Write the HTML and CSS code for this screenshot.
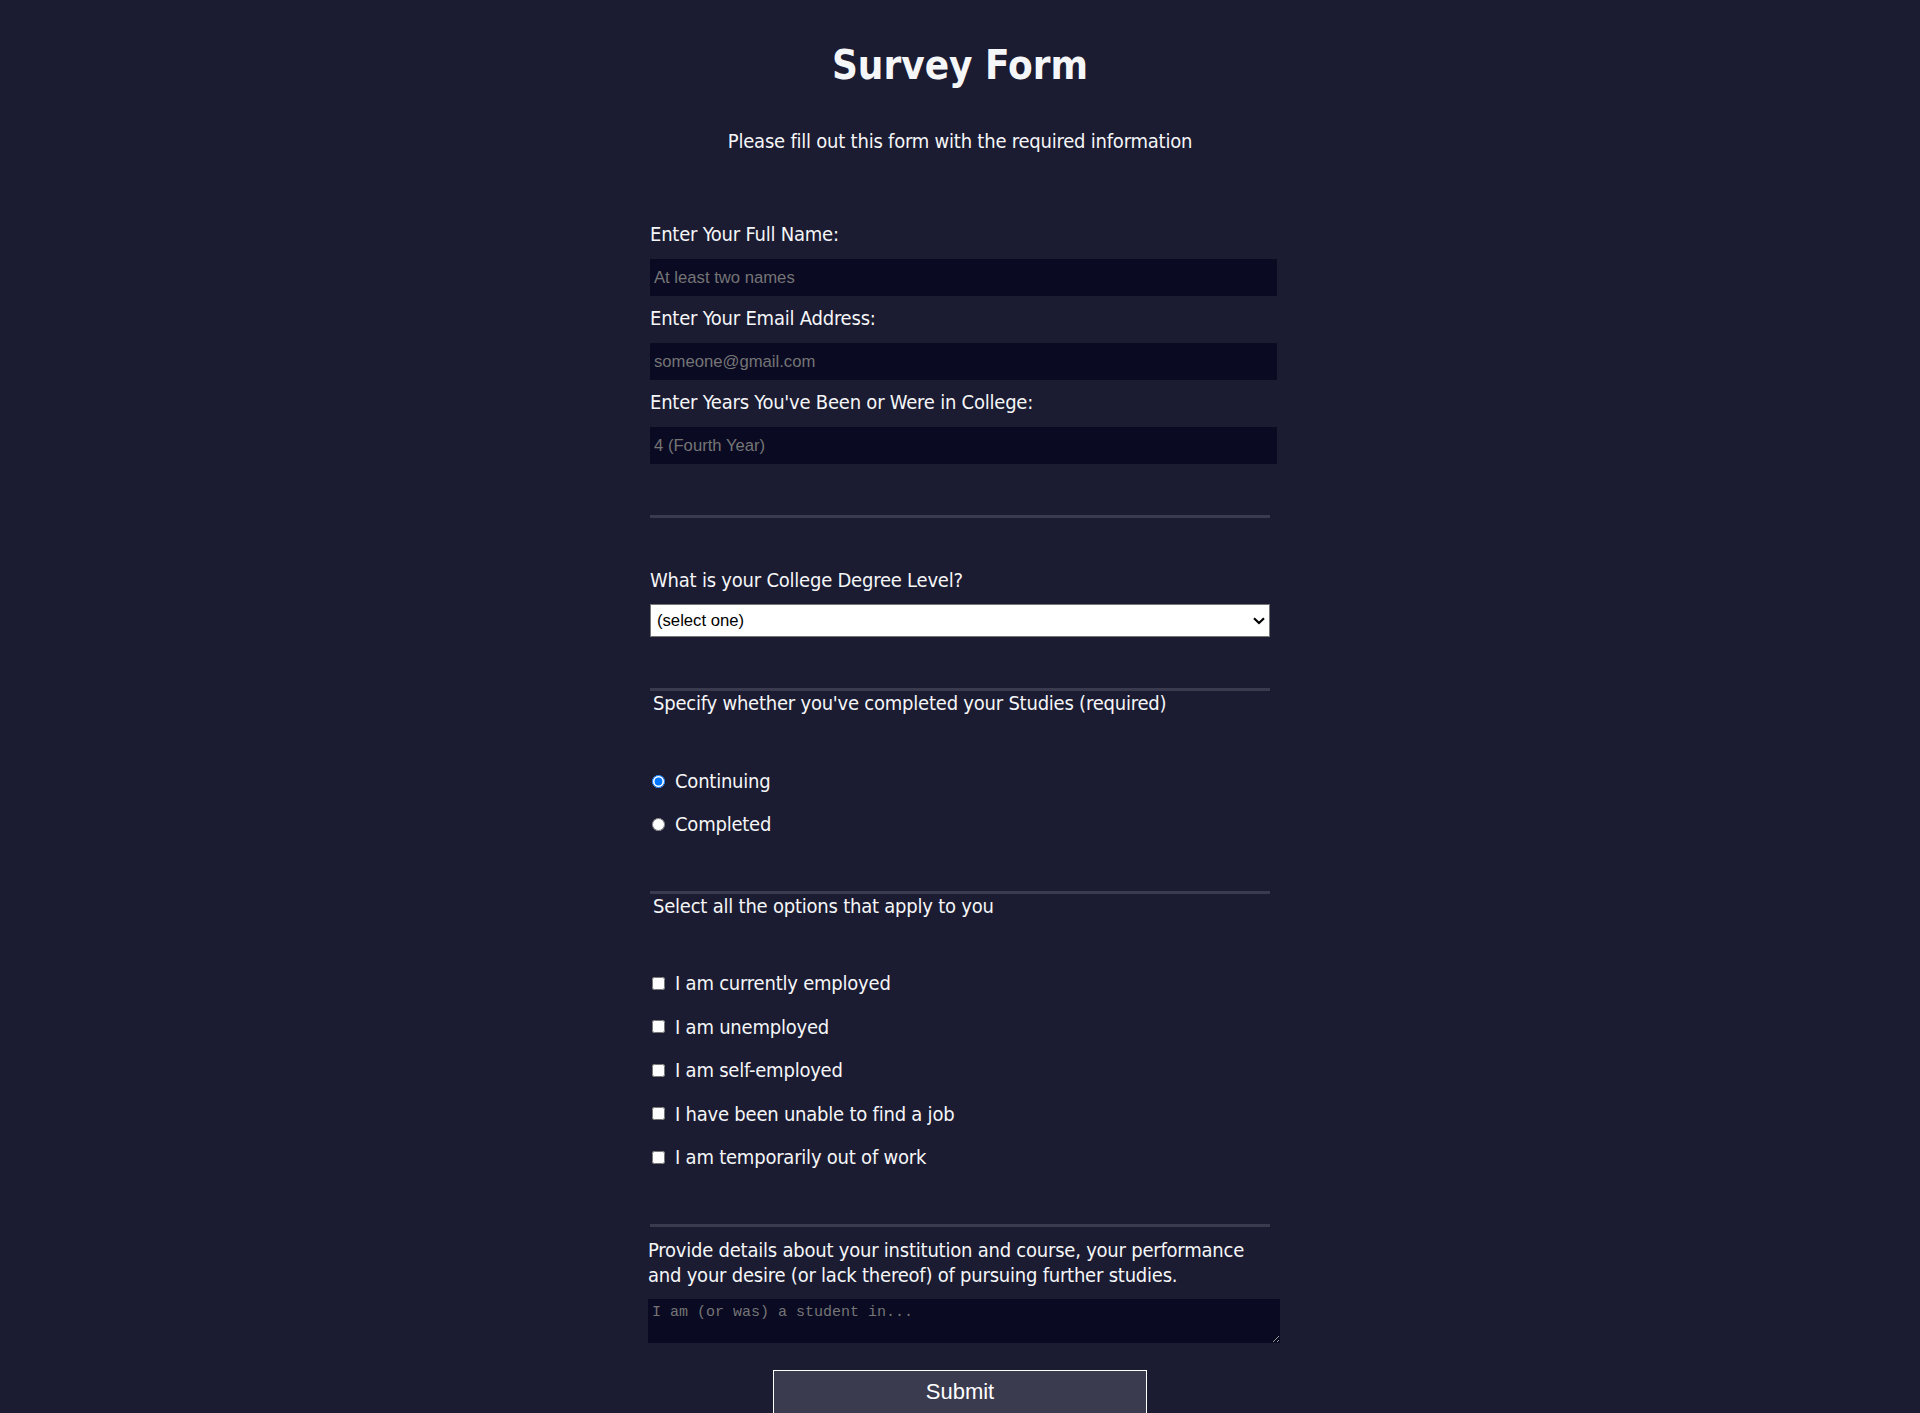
FILE: index.html
```html
<!DOCTYPE html>
<html lang="en">
<head>
<meta charset="utf-8">
<title>Survey Form</title>
<link rel="stylesheet" href="styles.css">
</head>
<body>
<header class="header">
  <h1 class="title" id="title">Survey Form</h1>
  <p class="description" id="description">Please fill out this form with the required information</p>
</header>
<form class="survey" id="survey-form">
  <div class="group basics">
    <label class="field-label" for="name" id="name-label">Enter Your Full Name:</label>
    <input class="text-input" id="name" type="text" placeholder="At least two names">
    <label class="field-label gap-top" for="email" id="email-label">Enter Your Email Address:</label>
    <input class="text-input" id="email" type="email" placeholder="someone@gmail.com">
    <label class="field-label gap-top" for="number" id="number-label">Enter Years You've Been or Were in College:</label>
    <input class="text-input" id="number" type="number" placeholder="4 (Fourth Year)">
  </div>

  <div class="divider divider-1"></div>

  <div class="group degree">
    <label class="field-label" for="dropdown">What is your College Degree Level?</label>
    <div class="select-wrap">
      <select class="select" id="dropdown">
        <option>(select one)</option>
        <option>Associate</option>
        <option>Bachelor's</option>
        <option>Master's</option>
        <option>Doctorate</option>
      </select>
      <svg class="chevron" width="12" height="8" viewBox="0 0 12 8" aria-hidden="true"><path d="M1 1.2 L6 6 L11 1.2" fill="none" stroke="#000" stroke-width="2.2"/></svg>
    </div>
  </div>

  <div class="divider divider-2"></div>

  <div class="group status">
    <p class="legend">Specify whether you've completed your Studies (required)</p>
    <div class="options radios">
      <label class="option"><input class="mark" type="radio" name="status" value="continuing" checked><span>Continuing</span></label>
      <label class="option"><input class="mark" type="radio" name="status" value="completed"><span>Completed</span></label>
    </div>
  </div>

  <div class="divider divider-3"></div>

  <div class="group work">
    <p class="legend">Select all the options that apply to you</p>
    <div class="options checks">
      <label class="option"><input class="mark" type="checkbox" value="employed"><span>I am currently employed</span></label>
      <label class="option"><input class="mark" type="checkbox" value="unemployed"><span>I am unemployed</span></label>
      <label class="option"><input class="mark" type="checkbox" value="self"><span>I am self-employed</span></label>
      <label class="option"><input class="mark" type="checkbox" value="unable"><span>I have been unable to find a job</span></label>
      <label class="option"><input class="mark" type="checkbox" value="temporary"><span>I am temporarily out of work</span></label>
    </div>
  </div>

  <div class="divider divider-4"></div>

  <div class="group details">
    <label class="details-label" for="details">Provide details about your institution and course, your performance and your desire (or lack thereof) of pursuing further studies.</label>
    <textarea class="textarea" id="details" placeholder="I am (or was) a student in..."></textarea>
  </div>

  <div class="actions">
    <button class="submit" id="submit" type="submit">Submit</button>
  </div>
</form>
</body>
</html>
```
FILE: styles.css
```css
* { box-sizing: border-box; }

html, body {
  margin: 0;
  padding: 0;
}

body {
  background: #1b1b32;
  color: #f5f6f7;
  font-family: "DejaVu Sans Condensed", "DejaVu Sans", sans-serif;
  font-stretch: condensed;
  font-size: 20px;
  line-height: 24px;
  letter-spacing: -0.22px;
}

.header {
  text-align: center;
}

.title {
  margin: 41px 0 0;
  font-size: 40px;
  line-height: 48px;
  font-weight: bold;
  letter-spacing: 0;
}

.description {
  margin: 40px 0 0;
  font-size: 20px;
  line-height: 24px;
}

.survey {
  width: 620px;
  margin: 69px auto 0;
}

.group {
  display: flex;
  flex-direction: column;
}

.field-label {
  display: block;
  line-height: 24px;
}

.field-label.gap-top {
  margin-top: 10px;
}

.text-input {
  display: block;
  width: 627px;
  height: 37px;
  margin-top: 13px;
  padding: 0 4px;
  border: none;
  outline: none;
  background: #0a0a23;
  color: #f5f6f7;
  font-family: "Liberation Sans", Arial, sans-serif;
  font-size: 16.67px;
  letter-spacing: 0;
}

.text-input::placeholder,
.textarea::placeholder {
  color: #757575;
  opacity: 1;
}

.text-input::-webkit-outer-spin-button,
.text-input::-webkit-inner-spin-button {
  -webkit-appearance: none;
  margin: 0;
}

.divider {
  height: 3px;
  width: 620px;
  background: #3b3b4f;
}

.divider-1 { margin-top: 51px; }
.divider-2 { margin-top: 51px; }
.divider-3 { margin-top: 55px; }
.divider-4 { margin-top: 55px; }

.degree {
  margin-top: 50px;
}

.select-wrap {
  position: relative;
  margin-top: 12px;
  width: 620px;
}

.select {
  display: block;
  width: 620px;
  height: 33px;
  padding: 0 24px 0 6px;
  border: 1px solid #767676;
  border-radius: 0;
  background: #ffffff;
  color: #000000;
  font-family: "Liberation Sans", Arial, sans-serif;
  font-size: 16.67px;
  letter-spacing: 0;
  -webkit-appearance: none;
  appearance: none;
  outline: none;
}

.chevron {
  position: absolute;
  right: 5px;
  top: 13px;
  pointer-events: none;
}

.legend {
  margin: 0;
  padding-left: 3px;
  line-height: 24px;
}

.options {
  display: flex;
  flex-direction: column;
}

.radios {
  margin-top: 54px;
  gap: 19px;
}

.checks {
  margin-top: 53px;
  gap: 19.5px;
}

.option {
  display: flex;
  align-items: center;
  height: 24px;
}

.mark {
  width: 13px;
  height: 13px;
  margin: 0 10px 0 2px;
  flex: none;
}

.details {
  margin-top: 11px;
  margin-left: -2px;
  width: 632px;
}

.details-label {
  display: block;
  line-height: 24.5px;
}

.textarea {
  display: block;
  width: 632px;
  height: 44px;
  margin-top: 12px;
  padding: 5px 4px 3px;
  border: none;
  outline: none;
  background: #0a0a23;
  color: #f5f6f7;
  font-family: "Liberation Mono", "DejaVu Sans Mono", monospace;
  font-size: 15px;
  line-height: 18px;
  letter-spacing: 0;
}

.actions {
  display: flex;
  justify-content: center;
  margin-top: 27px;
}

.submit {
  width: 374px;
  height: 44px;
  border: 1px solid #ffffff;
  background: #3b3b4f;
  color: #ffffff;
  font-family: "Liberation Sans", Arial, sans-serif;
  font-size: 22px;
  letter-spacing: 0;
  padding: 0;
}
```
